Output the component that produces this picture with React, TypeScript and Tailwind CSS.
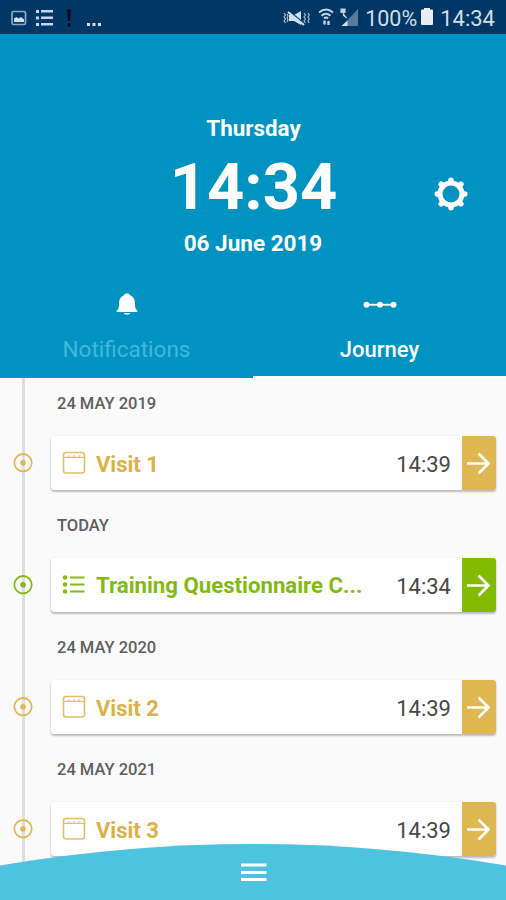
import React from "react";

type Kind = "visit" | "questionnaire";

interface Entry {
  day: string;
  title: string;
  time: string;
  kind: Kind;
}

const entries: Entry[] = [
  { day: "24 MAY 2019", title: "Visit 1", time: "14:39", kind: "visit" },
  { day: "TODAY", title: "Training Questionnaire C...", time: "14:34", kind: "questionnaire" },
  { day: "24 MAY 2020", title: "Visit 2", time: "14:39", kind: "visit" },
  { day: "24 MAY 2021", title: "Visit 3", time: "14:39", kind: "visit" },
];

function StatusBar() {
  return (
    <div className="flex h-[34px] shrink-0 items-center bg-[#003764] pl-[11px] pr-[11px] text-[#d3deeb]">
      <svg width="16" height="16" viewBox="0 0 16 16" fill="none" className="mt-px">
        <rect x="1" y="1.5" width="13.500" height="13" rx="1.500" stroke="#8fa9c2" strokeWidth="1.700" />
        <path d="M3 12V8.500l2.500-1.500 2 1.500L10 7l3 2.500V12z" fill="#d3deeb" />
      </svg>
      <svg width="18" height="18" viewBox="0 0 18 18" fill="#c5d6f0" className="ml-[8px] mt-[2px]">
        <path d="M1 1h3v3H1zM1 7.500h3v3H1zM1 14h3v3H1zM6 1h12v2.500H6zM6 7.500h12V10H6zM6 14h12v2.500H6z" />
      </svg>
      <svg width="6" height="20" viewBox="0 0 6 20" fill="#080d15" className="ml-[13px] mt-[2px]">
        <path d="M1 2Q3 0 5 2L4 13H2z" />
        <circle cx="3" cy="17" r="2" />
      </svg>
      <svg width="15" height="18" viewBox="0 0 15 18" fill="#d3deeb" className="ml-[14px] mt-[3px]">
        <path d="M1 13h3v3H1zM6.500 13h3v3h-3zM12 13h3v3h-3z" />
      </svg>
      <svg width="27" height="18" viewBox="0 0 27 18" fill="none" stroke="#a9bccf" className="ml-auto mr-[8px] mt-[2px]">
        <path d="M6 6h5l7-4v14l-7-4H6z" fill="#d3deeb" stroke="none" />
        <path d="M5 1.500l17 14" stroke="#003764" strokeWidth="2" />
        <path d="M5 3l16 13" stroke="#d3deeb" strokeWidth="2.200" />
        <path d="M1 4l1.500 2L1 8l1.500 2L1 12l1.500 2M4 5l1 2-1 2 1 2-1 2M21 4l1.500 2L21 8l1.500 2-1.500 2 1.500 2M25 4l1.200 2L25 8l1.200 2L25 12l1.200 2" strokeWidth="1.200" />
      </svg>
      <svg width="17" height="18" viewBox="0 0 17 18" fill="none" stroke="#c7d4e1" strokeWidth="1.900" className="mr-[5px]">
        <path d="M1 4.500q7-6 14 0M3.500 7.700q4.500-4 9 0M6 10.500q2-2 4 0" />
        <path d="M6.500 12.500v4M10.500 13v4" strokeWidth="2.400" />
      </svg>
      <svg width="19" height="19" viewBox="0 0 19 19" className="mr-[6px]">
        <path d="M18 1v17H2z" fill="#587b9d" />
        <path d="M7.500 12.500V18H1.500z" fill="#d3deeb" />
        <path d="M1 1h4v3.500H1zM3.500 5v2.500L7 10" fill="#c1cedb" stroke="#c1cedb" strokeWidth="1.200" />
      </svg>
      <span className="mt-[3px] w-[54px] text-[21.500px] leading-[26px]">100%</span>
      <svg width="14" height="18" viewBox="0 0 14 18" fill="#e7edf3" className="ml-[1px] mr-px">
        <path d="M4 0h6v1.500h2q1 0 1 1V16q0 1-1 1H2q-1 0-1-1V2.500q0-1 1-1h2z" />
      </svg>
      <span className="ml-[5px] mt-[3px] text-[22px] leading-[26px]">14:34</span>
    </div>
  );
}

function GearIcon() {
  return (
    <svg width="34" height="34" viewBox="-17 -17 34 34" fill="none" stroke="white">
      <circle r="11" strokeWidth="5" />
      <path
        d="M0-12v-1.800M0 12v1.800M-12 0h-1.800M12 0h1.800M8.500-8.500l1.400-1.400M8.500 8.500l1.400 1.400M-8.500-8.500l-1.400-1.400M-8.500 8.500l-1.400 1.400"
        strokeWidth="5.500"
        strokeLinecap="round"
      />
    </svg>
  );
}

function Header() {
  return (
    <header className="h-[344px] shrink-0 bg-[#0093c1] text-white">
      <div className="grid h-[242px] grid-cols-[80px_1fr_80px] pt-[78px]">
        <div className="col-start-2 flex flex-col items-center font-bold">
          <div className="pl-px pt-px text-[22.400px] leading-[30px]">Thursday</div>
          <div className="mt-[8px] pl-[1px] text-[65px] leading-[72px]">14:34</div>
          <div className="mt-[5px] text-[22.500px] leading-[31px]">06 June 2019</div>
        </div>
        <button className="mt-[65px] flex h-[34px] w-[49px] items-center justify-center self-start" aria-label="Settings">
          <GearIcon />
        </button>
      </div>
      <div className="grid h-[102px] grid-cols-2 text-[22px]">
        <div className="flex flex-col items-center pt-[16px]">
          <svg width="24" height="24" viewBox="0 0 24 24" fill="white">
            <path d="M1.500 20v-1.300Q4 17 4 14v-3q0-5.500 4.500-7.500L9 2.800Q10 1.500 12 1.500t3 1.300l.5.7Q20 5.500 20 11v3q0 3 2.500 4.700V20z" />
            <path d="M8.500 21h7q-.5 1.800-3.500 1.800T8.500 21z" />
          </svg>
          <span className="mt-[18px] text-[22.500px] leading-[30px] text-[#45b7dc]">Notifications</span>
        </div>
        <div className="flex flex-col items-center border-b-2 border-white pt-[17px]">
          <svg width="36" height="24" viewBox="0 0 36 24" fill="white">
            <path d="M4 10.800h28v1.900H4z" />
            <circle cx="4.500" cy="11.700" r="3" />
            <circle cx="18" cy="11.700" r="2.900" />
            <circle cx="31.500" cy="11.700" r="3" />
          </svg>
          <span className="mt-[18px] font-medium leading-[30px]">Journey</span>
        </div>
      </div>
    </header>
  );
}

function EntryIcon({ kind }: { kind: Kind }) {
  if (kind === "questionnaire") {
    return (
      <svg width="24" height="24" viewBox="0 0 24 24" fill="#82ba13">
        <circle cx="3" cy="4.500" r="2.200" />
        <circle cx="3" cy="11.500" r="2.200" />
        <circle cx="3" cy="18.500" r="2.200" />
        <path d="M8 3.500h14.500v2.100H8zM8 10.500h14.500v2.100H8zM8 17.500h14.500v2.100H8z" />
      </svg>
    );
  }
  return (
    <svg width="24" height="24" viewBox="0 0 24 24" fill="none" stroke="#e2bf65" strokeWidth="1.600">
      <rect x="1.500" y="1.500" width="21" height="20.500" rx="2.500" />
      <path d="M2 6.300h20" strokeWidth="1.300" />
      <path d="M7 4v2M12 4v2M17 4v2" strokeWidth="1" />
    </svg>
  );
}

function JourneyRow({ entry }: { entry: Entry }) {
  const green = entry.kind === "questionnaire";
  return (
    <section className="h-[122px] shrink-0">
      <h2 className="ml-[57px] h-[58px] pt-[14px] text-[16.500px] font-medium leading-[24px] text-[#5e5e5e]">{entry.day}</h2>
      <div className="flex h-[54px] items-center">
        <svg width="22" height="22" viewBox="0 0 22 22" className={green ? "ml-[12px] text-[#82ba13]" : "ml-[12px] text-[#dfb853]"}>
          <circle cx="11" cy="10.700" r="8.700" fill="none" stroke="currentColor" strokeWidth="1.800" />
          <circle cx="11" cy="10.700" r="2.800" fill="currentColor" />
        </svg>
        <div className="ml-[17px] flex h-[54px] w-[445px] items-center overflow-hidden rounded-[3px] bg-white shadow-[0_2px_2px_rgba(0,0,0,0.24),0_0_2px_rgba(0,0,0,0.1)]">
          <div className="ml-[11px]"><EntryIcon kind={entry.kind} /></div>
          <span className={green ? "ml-[10px] mt-px whitespace-nowrap text-[22.200px] font-bold leading-[29px] text-[#82ba13]" : "ml-[10px] mt-[3px] whitespace-nowrap text-[22px] font-bold leading-[30px] text-[#dbb148]"}>
            {entry.title}
          </span>
          <span className="ml-auto mr-[11px] mt-[3px] text-[22px] leading-[30px] text-[#484848]">{entry.time}</span>
          <div className={green ? "flex h-full w-[34px] items-center justify-center bg-[#82bb00]" : "flex h-full w-[34px] items-center justify-center bg-[#deb751]"}>
            <svg width="26" height="26" viewBox="0 0 26 26" fill="none" stroke="white" strokeWidth="2.700">
              <path d="M1 13.500h21.500M12.500 3.500l10 10-10 10" />
            </svg>
          </div>
        </div>
      </div>
    </section>
  );
}

export default function App() {
  return (
    <div className="relative flex h-[900px] w-[506px] flex-col overflow-hidden bg-[#fafafa] font-['Roboto',sans-serif]">
      <StatusBar />
      <Header />
      <main className="flex flex-1 flex-col overflow-hidden bg-[linear-gradient(#dedede,#dedede)] bg-[length:3px_100%] bg-[position:22px_0] bg-no-repeat">
        {entries.map((entry) => (
          <JourneyRow key={entry.day} entry={entry} />
        ))}
      </main>
      <nav className="absolute inset-x-0 bottom-0 h-[56px]">
        <svg width="506" height="56" viewBox="0 0 506 56">
          <path d="M0 21.500Q126 0 253 0T506 21.500V56H0z" fill="#4ec3e0" />
          <path d="M241 19.500h25.500v3H241zM241 27h25.500v3H241zM241 34h25.500v3H241z" fill="white" />
        </svg>
      </nav>
    </div>
  );
}
